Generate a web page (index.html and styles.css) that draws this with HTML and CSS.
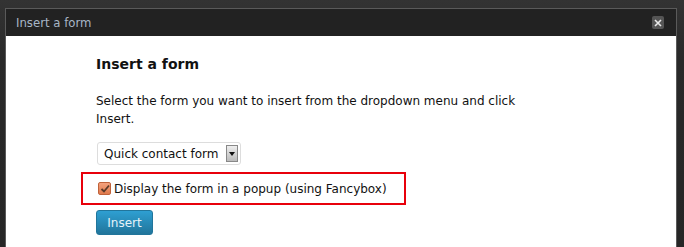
FILE: index.html
```html
<!DOCTYPE html>
<html lang="en">
<head>
	<meta charset="UTF-8">
	<title>Insert a form</title>
	<link rel="stylesheet" href="styles.css">
</head>
<body>
	<div class="dialog">
		<div class="titlebar">
			<span class="dtitle">Insert a form</span>
			<span class="close">
				<svg width="8" height="8" viewBox="0 0 8 8"><path d="M1 1L7 7M7 1L1 7" stroke="#e8e8e8" stroke-width="1.6"/></svg>
			</span>
		</div>
		<div class="content">
			<h3 class="heading">Insert a form</h3>
			<p class="intro">Select the form you want to insert from the dropdown menu and click Insert.</p>
			<div class="selectbox">
				<span class="selecttext">Quick contact form</span>
				<span class="arrow"><svg width="6" height="4" viewBox="0 0 6 4"><path d="M0 0H6L3 4Z" fill="#111"/></svg></span>
			</div>
			<div class="popup">
				<span class="check"><svg width="10" height="10" viewBox="0 0 10 10"><path d="M1.5 5L4 7.5L9 1.5" stroke="#5a3a2a" stroke-width="1.8" fill="none"/></svg></span>
				<label class="popuplabel">Display the form in a popup (using Fancybox)</label>
			</div>
			<button class="btn">Insert</button>
		</div>
	</div>
</body>
</html>
```

FILE: styles.css
```css
body{
	margin: 0;
	padding: 8px 7px 0 5px;
	background: linear-gradient(#333333, #292929 60px, #262626);
	font-family: "DejaVu Sans", Verdana, sans-serif;
	font-size: 12px;
	height: 247px;
	box-sizing: border-box;
	overflow: hidden;
}

.dialog{
	border: 1px solid #5a5a5a;
	border-bottom: none;
	background-color: #fff;
	height: 240px;
}

.titlebar{
	height: 27px;
	background-color: #222;
	display: flex;
	align-items: center;
	justify-content: space-between;
	padding: 0 12px 0 10px;
}

.dtitle{
	font-family: "DejaVu Sans Condensed", "DejaVu Sans", sans-serif;
	font-size: 13px;
	color: #a8b6c6;
}

.close{
	width: 12px;
	height: 13px;
	background-color: #555;
	border-radius: 2px;
	display: flex;
	align-items: center;
	justify-content: center;
}

.content{
	padding: 18px 0 0 90px;
	color: #111;
}

.heading{
	margin: 0;
	font-size: 14px;
	line-height: 20px;
}

.intro{
	margin: 18px 0 0 0;
	width: 450px;
	line-height: 18px;
}

.selectbox{
	display: inline-flex;
	align-items: center;
	margin: 14px 0 0 1px;
	height: 21px;
	padding: 0 2px 0 6px;
	border: 1px solid #ddd;
	border-radius: 3px;
}

.selecttext{
	margin-right: 8px;
}

.arrow{
	width: 10px;
	height: 15px;
	background: linear-gradient(#eee, #bbb);
	border: 1px solid #888;
	display: flex;
	align-items: center;
	justify-content: center;
}

.popup{
	display: flex;
	align-items: center;
	width: 306px;
	height: 29px;
	margin: 7px 0 0 -15px;
	padding-left: 15px;
	border: 2px solid #e8000b;
}

.check{
	width: 11px;
	height: 11px;
	border: 1px solid #c0623a;
	border-radius: 2px;
	background: linear-gradient(#f4a27e, #e07a4c);
	display: flex;
	align-items: center;
	justify-content: center;
	margin-right: 3px;
}

.btn{
	display: block;
	margin-top: 5px;
	width: 57px;
	height: 25px;
	border: 1px solid #21759b;
	border-radius: 3px;
	background: linear-gradient(#2e9fd2, #21759b);
	color: #e6f2f8;
	font-family: "DejaVu Sans", sans-serif;
	font-size: 12px;
	padding: 0;
}
```
